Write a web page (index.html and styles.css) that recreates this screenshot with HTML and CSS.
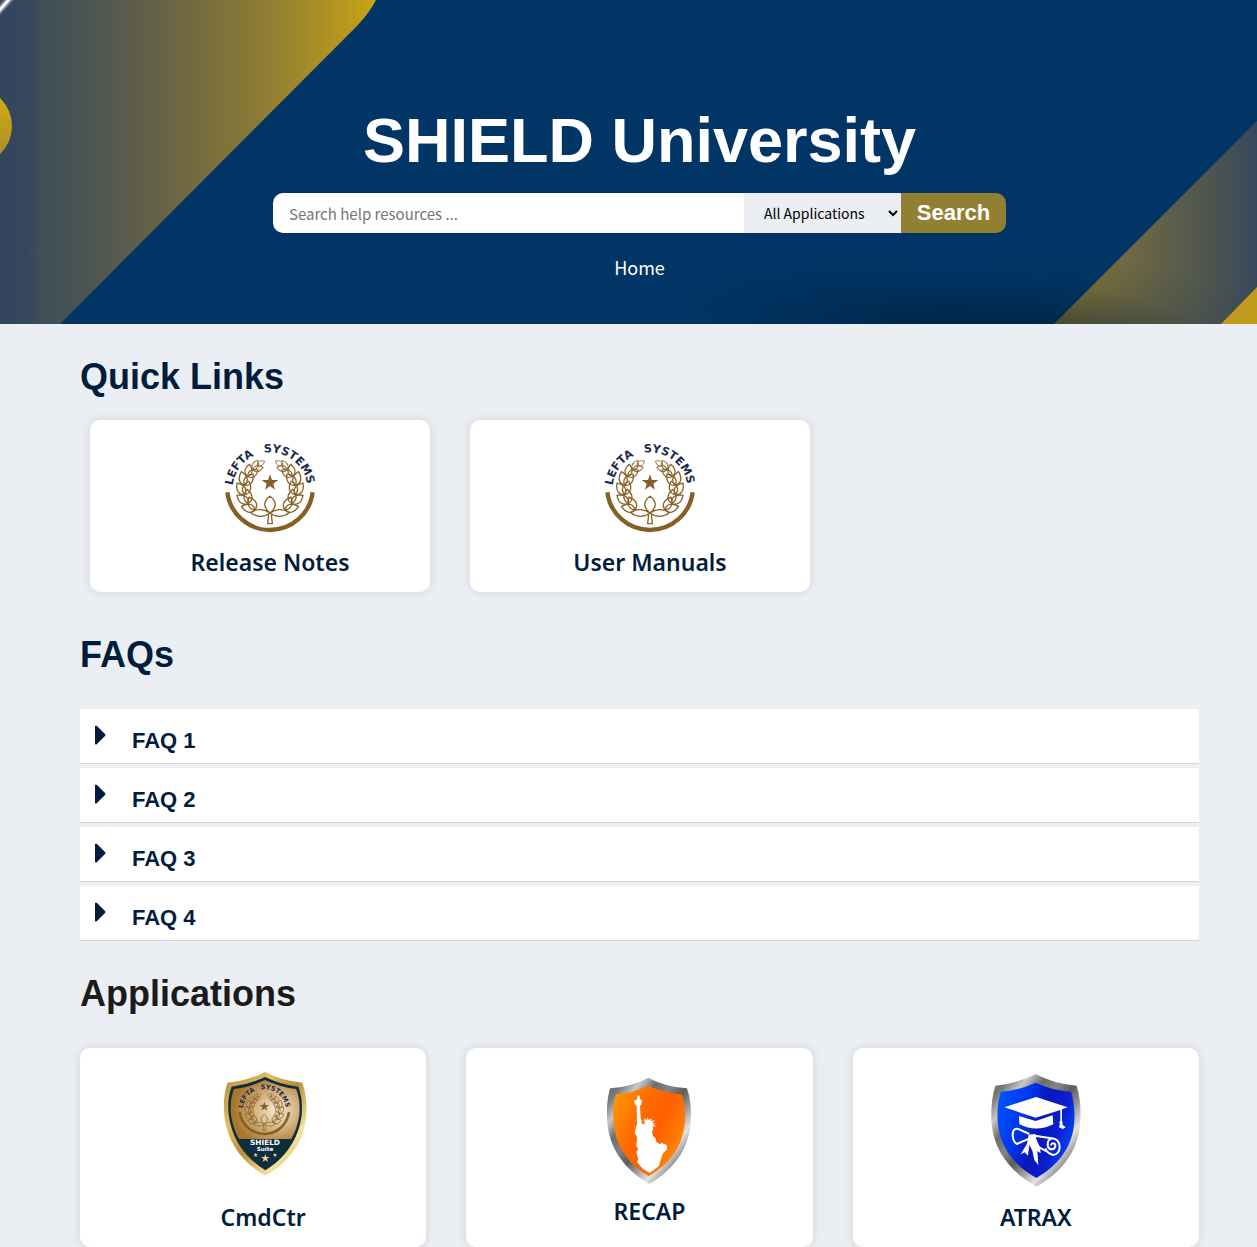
FILE: index.html
```html
<!DOCTYPE html>
<html lang="en">
<head>
<meta charset="utf-8">
<meta name="viewport" content="width=device-width, initial-scale=1">
<title>SHIELD University</title>
<link rel="stylesheet" href="styles.css">
</head>
<body>
<svg class="sprite" aria-hidden="true">
  <defs>
    <path id="arc" d="M67 180A113 113 0 0 1 293 180"/>
    <path id="leaf" d="M0 0C-16 -9 -16 -26 0 -42C16 -26 16 -9 0 0Z"/>
    <path id="star" d="M0 -25L6 -8L25 -8L10 3L15 21L0 10L-15 21L-10 3L-25 -8L-6 -8Z"/>
    <g id="pair">
      <use href="#leaf" transform="rotate(-112)"/>
      <use href="#leaf" transform="rotate(-62)"/>
    </g>
    <g id="branch">
      <use href="#pair" transform="rotate(36) translate(0 76)"/>
      <use href="#pair" transform="rotate(57) translate(0 77)"/>
      <use href="#pair" transform="rotate(78) translate(0 77)"/>
      <use href="#pair" transform="rotate(99) translate(0 77)"/>
      <use href="#pair" transform="rotate(120) translate(0 77) scale(.88)"/>
      <use href="#pair" transform="rotate(139) translate(0 78) scale(.75)"/>
      <use href="#leaf" transform="rotate(152) translate(0 82) rotate(-90) scale(.6)"/>
    </g>
    <symbol id="seal" viewBox="0 6 360 336">
      <g fill="none" stroke="#8a6428" stroke-width="4">
        <use href="#branch" transform="translate(180 178)"/>
        <use href="#branch" transform="translate(180 178) scale(-1 1)"/>
        <path fill="#fff" class="sprout" d="M180 249C158 232 160 214 180 199C200 214 202 232 180 249ZM180 249C164 238 140 234 122 248C142 263 164 262 180 249ZM180 249C196 238 220 234 238 248C218 263 196 262 180 249Z"/>
        <path d="M176 253L173 281H187L184 253"/>
      </g>
      <path fill="none" stroke="#865f27" stroke-width="13" d="M52 187A129 129 0 0 0 308 187"/>
      <use href="#star" fill="#865f27" transform="translate(180 158)"/>
      <text class="seal-text"><textPath href="#arc" startOffset="20%">LEFTA</textPath></text>
      <text class="seal-text"><textPath href="#arc" startOffset="70%">SYSTEMS</textPath></text>
    </symbol>
    <linearGradient id="steel" x1="0" y1="0" x2="1" y2="1">
      <stop offset="0" stop-color="#6f6f6f"/><stop offset=".12" stop-color="#777"/><stop offset=".22" stop-color="#c9c9c9"/>
      <stop offset=".32" stop-color="#6c6c6c"/><stop offset=".42" stop-color="#858585"/><stop offset=".52" stop-color="#5c5c5c"/>
      <stop offset=".62" stop-color="#9c9c9c"/><stop offset=".72" stop-color="#e3e3e3"/><stop offset=".84" stop-color="#777"/><stop offset="1" stop-color="#999"/>
    </linearGradient>
    <linearGradient id="gold" x1="0" y1="0" x2="1" y2="1">
      <stop offset="0" stop-color="#b58d36"/><stop offset=".3" stop-color="#e0bd64"/><stop offset=".5" stop-color="#b98e38"/>
      <stop offset=".75" stop-color="#f5e29b"/><stop offset="1" stop-color="#c79b40"/>
    </linearGradient>
    <radialGradient id="bronze" cx=".66" cy=".52" r=".62">
      <stop offset="0" stop-color="#f4e7cf"/><stop offset=".4" stop-color="#dcc093"/><stop offset="1" stop-color="#a8752b"/>
    </radialGradient>
    <linearGradient id="orange" x1="0" y1=".2" x2="1" y2=".8">
      <stop offset="0" stop-color="#ff9400"/><stop offset=".35" stop-color="#ff6a00"/><stop offset=".6" stop-color="#ff5f00"/><stop offset="1" stop-color="#ff9700"/>
    </linearGradient>
    <linearGradient id="blue" x1="0" y1=".3" x2="1" y2=".7">
      <stop offset="0" stop-color="#0050ff"/><stop offset=".28" stop-color="#0038f0"/><stop offset=".52" stop-color="#0a17b8"/><stop offset=".75" stop-color="#0b20d0"/><stop offset="1" stop-color="#0050ff"/>
    </linearGradient>
  </defs>
</svg>

<header class="hero">
  <svg class="hero-art" viewBox="0 0 1257 324" preserveAspectRatio="xMidYMid slice" aria-hidden="true">
    <defs>
      <linearGradient id="band-left" gradientUnits="userSpaceOnUse" x1="0" y1="0" x2="376" y2="0">
        <stop offset="0" stop-color="#34455f"/><stop offset=".06" stop-color="#35465e"/><stop offset=".12" stop-color="#3f4f58"/>
        <stop offset=".3" stop-color="#55594f"/><stop offset=".48" stop-color="#6e6743"/><stop offset=".7" stop-color="#8e7c34"/>
        <stop offset=".88" stop-color="#b09322"/><stop offset="1" stop-color="#c9a416"/>
      </linearGradient>
      <linearGradient id="band-right" gradientUnits="userSpaceOnUse" x1="1054" y1="0" x2="1257" y2="0">
        <stop offset="0" stop-color="#8a7831"/><stop offset=".4" stop-color="#6d6744"/><stop offset=".75" stop-color="#4f564f"/><stop offset="1" stop-color="#38485c"/>
      </linearGradient>
      <linearGradient id="dot" x1="0" y1="0" x2="0" y2="1">
        <stop offset="0" stop-color="#d9ae10"/><stop offset="1" stop-color="#a58c28"/>
      </linearGradient>
      <radialGradient id="shade">
        <stop offset="0" stop-color="#001528" stop-opacity=".6"/><stop offset=".4" stop-color="#001a33" stop-opacity=".34"/><stop offset="1" stop-color="#002040" stop-opacity="0"/>
      </radialGradient>
    </defs>
    <path fill="url(#band-left)" d="M0 0H376Q370 12 357 26L60 324H0Z"/>
    <circle cx="-27" cy="126" r="39" fill="url(#dot)"/>
    <path d="M-4 14L14 -6" stroke="#fff" stroke-opacity=".35" stroke-width="7"/>
    <path d="M-4 14L14 -6" stroke="#fff" stroke-width="3"/>
    <path fill="url(#band-right)" d="M1257 121L1054 324H1257Z"/>
    <ellipse cx="970" cy="338" rx="300" ry="68" fill="url(#shade)" transform="rotate(6 970 338)"/>
    <ellipse cx="1060" cy="345" rx="220" ry="90" fill="url(#shade)" opacity=".5"/>
    <path fill="#c19c1c" d="M1257 287L1221 324H1257Z"/>
  </svg>
  <div class="hero-body">
    <h1>SHIELD University</h1>
    <form class="search">
      <input type="search" placeholder="Search help resources ..." aria-label="Search help resources">
      <select aria-label="Application"><option>All Applications</option></select>
      <button type="button">Search</button>
    </form>
    <nav><a href="#">Home</a></nav>
  </div>
</header>

<main>
  <section class="quick">
    <h2>Quick Links</h2>
    <div class="quick-cards">
      <a class="card" href="#">
        <svg width="120" height="112" aria-hidden="true"><use href="#seal"/></svg>
        <h3>Release Notes</h3>
      </a>
      <a class="card" href="#">
        <svg width="120" height="112" aria-hidden="true"><use href="#seal"/></svg>
        <h3>User Manuals</h3>
      </a>
    </div>
  </section>

  <section class="faqs">
    <h2>FAQs</h2>
    <div class="faq-list">
      <details><summary><svg width="12" height="20" viewBox="0 0 12 20" aria-hidden="true"><path d="M0 1Q1 0 2 1L10 9Q11 10 10 11L2 19Q1 20 0 19Z"/></svg><span>FAQ 1</span></summary></details>
      <details><summary><svg width="12" height="20" viewBox="0 0 12 20" aria-hidden="true"><path d="M0 1Q1 0 2 1L10 9Q11 10 10 11L2 19Q1 20 0 19Z"/></svg><span>FAQ 2</span></summary></details>
      <details><summary><svg width="12" height="20" viewBox="0 0 12 20" aria-hidden="true"><path d="M0 1Q1 0 2 1L10 9Q11 10 10 11L2 19Q1 20 0 19Z"/></svg><span>FAQ 3</span></summary></details>
      <details><summary><svg width="12" height="20" viewBox="0 0 12 20" aria-hidden="true"><path d="M0 1Q1 0 2 1L10 9Q11 10 10 11L2 19Q1 20 0 19Z"/></svg><span>FAQ 4</span></summary></details>
    </div>
  </section>

  <section class="apps">
    <h2>Applications</h2>
    <div class="app-cards">
      <a class="card" href="#">
        <svg class="suite" width="110" height="139" viewBox="-6 0 330 417" aria-hidden="true">
          <path fill="url(#gold)" d="M165 36Q115 62 52 68Q38 110 43 165C52 250 100 310 166 347C232 310 282 250 289 165Q292 110 277 68Q215 62 165 36Z"/>
          <path fill="#0e2e3e" d="M165 51Q115 75 65 80Q51 115 56 165C66 240 108 295 166 331C224 295 266 240 275 165Q279 115 265 80Q215 75 165 51Z"/>
          <path fill="url(#bronze)" d="M165 60Q115 83 72 87Q59 118 63 165Q69 205 87 237H244Q262 205 268 165Q272 118 258 87Q215 83 165 60Z"/>
          <use href="#seal" x="59" y="52" width="208" height="194"/>
          <text class="shield-name" x="165" y="256">SHIELD</text>
          <text class="shield-sub" x="165" y="274">Suite</text>
          <use href="#star" fill="#ecd493" transform="translate(166 295) scale(.52)"/>
          <use href="#star" fill="#ecd493" transform="translate(137 285) scale(.28)"/>
          <use href="#star" fill="#ecd493" transform="translate(195 285) scale(.28)"/>
        </svg>
        <h3>CmdCtr</h3>
      </a>
      <a class="card" href="#">
        <svg width="110" height="133" viewBox="-1 -15 330 399" aria-hidden="true">
          <path fill="url(#steel)" d="M162 38Q110 66 47 70Q34 115 39 175C47 260 98 318 165 357C232 318 282 260 289 175Q294 115 278 70Q214 66 162 38Z"/>
          <path fill="url(#orange)" d="M162 62Q115 84 65 88Q53 125 58 175C66 250 106 300 163 333C222 300 264 250 271 175Q276 125 262 88Q210 84 162 62Z"/>
          <path fill="#fff" d="M129 94L133 90L137 96L136 103L143 105L141 118L137 123L139 158L144 178L150 176L152 171L144 166L153 167L147 159L157 165L160 157L163 165L173 160L169 168L182 166L173 173L188 178L174 178L187 185L175 184L177 192L173 200L176 213L183 219L186 231L198 238L201 233L218 241L217 254L205 266L199 286L193 304L166 324L145 311L128 291L132 284L126 261L132 252L126 243L128 217L121 203L124 188L128 178L127 123L121 117L120 105L128 104Z"/>
        </svg>
        <h3>RECAP</h3>
      </a>
      <a class="card" href="#">
        <svg width="110" height="139" viewBox="3 -15 330 417" aria-hidden="true">
          <path fill="url(#steel)" d="M167 27Q110 56 46 62Q30 115 35 180C45 265 98 325 169 365C240 325 292 265 300 180Q306 115 290 62Q220 56 167 27Z"/>
          <path fill="url(#blue)" d="M167 53Q115 77 63 80Q48 125 54 180C63 252 108 305 169 339C230 305 274 252 282 180Q287 125 273 80Q218 77 167 53Z"/>
          <path fill="#fff" d="M73 127L168 96L263 127L246 133V169L249 174L246 178L257 187L248 192L237 187L240 177L237 172L241 168V135L167 158ZM117 153L167 168L218 151L220 178Q168 203 118 178Z"/>
          <path fill="none" stroke="#fff" stroke-width="6" stroke-linejoin="round" d="M148 207L112 191Q98 190 98 210Q99 230 110 237L149 220M164 212L214 220M163 239L219 270Q238 268 239 246Q238 222 216 220Q202 224 203 240Q205 254 218 253Q229 248 225 237Q216 231 212 241M219 270Q198 262 197 250"/>
          <path fill="#fff" d="M146 209L166 207L169 223L180 247L182 265L172 258L175 300L163 285L157 257L148 239L144 272L134 262L122 268L141 236Z"/>
        </svg>
        <h3>ATRAX</h3>
      </a>
    </div>
  </section>
</main>
</body>
</html>
```
FILE: styles.css
```css
* { box-sizing: border-box; }

body {
  margin: 0;
  background: #ebeff4;
  color: #001d3d;
  font-family: "Noto Sans", sans-serif;
}

h1, h2, h3 { margin: 0; }

h1, h2, summary, .search button {
  font-family: "Liberation Sans", Arial, sans-serif;
  font-weight: 700;
}

a { color: inherit; text-decoration: none; }

.sprite { position: absolute; width: 0; height: 0; }

.hero {
  position: relative;
  overflow: hidden;
  background: #003565;
  color: #fff;
}

.hero-art { position: absolute; inset: 0; width: 100%; height: 100%; }

.hero-body {
  position: relative;
  display: flex;
  flex-direction: column;
  align-items: center;
  padding: 104px 58px 43px 80px;
}

h1 { font-size: 63px; line-height: 72px; }

.search {
  display: flex;
  width: 100%;
  max-width: 733px;
  height: 40px;
  margin-top: 17px;
  border-radius: 10px;
  overflow: hidden;
}

.search input {
  flex: 1;
  min-width: 0;
  padding: 0 16px;
  border: 0;
  background: #fff;
  font: 15px "Noto Sans CJK SC", sans-serif;
}

.search input::placeholder { color: #757575; }

.search select {
  width: 157px;
  padding: 0 0 0 16px;
  border: 0;
  border-radius: 0;
  background: #ebeff4;
  color: #000;
  font: 14px "Noto Sans CJK SC", sans-serif;
}

.search button {
  width: 105px;
  padding: 0;
  border: 0;
  background: #917f32;
  color: #fff;
  font-size: 22px;
}

nav {
  margin-top: 20px;
  font: 18px/28px "Noto Sans CJK SC", sans-serif;
}

main { padding: 31px 58px 0 80px; }

h2 { font-size: 36px; line-height: 44px; }

.card {
  display: flex;
  flex-direction: column;
  align-items: center;
  padding: 12px 0 12px 20px;
  border-radius: 10px;
  background: #fff;
  box-shadow: 0 0 10px rgba(0, 0, 0, .12);
}

.card h3 { font-size: 23px; font-weight: 600; line-height: 36px; }

.quick-cards {
  display: flex;
  gap: 40px;
  margin: 21px 10px 0;
}

.quick-cards .card { width: 340px; }

.faqs { margin-top: 41px; }

.faq-list {
  display: flex;
  flex-direction: column;
  gap: 4px;
  margin-top: 32px;
}

.faq-list details { background: #fff; border-bottom: 1px solid #d0d5db; }

summary {
  display: flex;
  gap: 25px;
  padding: 16px 15px 10px;
  font-size: 22px;
  list-style: none;
  cursor: pointer;
}

summary svg { fill: #001d3d; }
summary span { padding-top: 4px; line-height: 24px; }

.apps { margin-top: 31px; }
.apps h2 { color: #1b1b1b; }

.app-cards {
  display: grid;
  grid-template-columns: repeat(3, 1fr);
  gap: 40px;
  margin-top: 32px;
}

.seal-text {
  fill: #1d2b4d;
  font: 700 34px "DejaVu Sans", sans-serif;
  text-anchor: middle;
}

.sprout { fill: none; }

.shield-name, .shield-sub {
  fill: #fff;
  font: 700 22px "DejaVu Sans", sans-serif;
  text-anchor: middle;
}

.shield-sub { font-size: 17px; }
```
